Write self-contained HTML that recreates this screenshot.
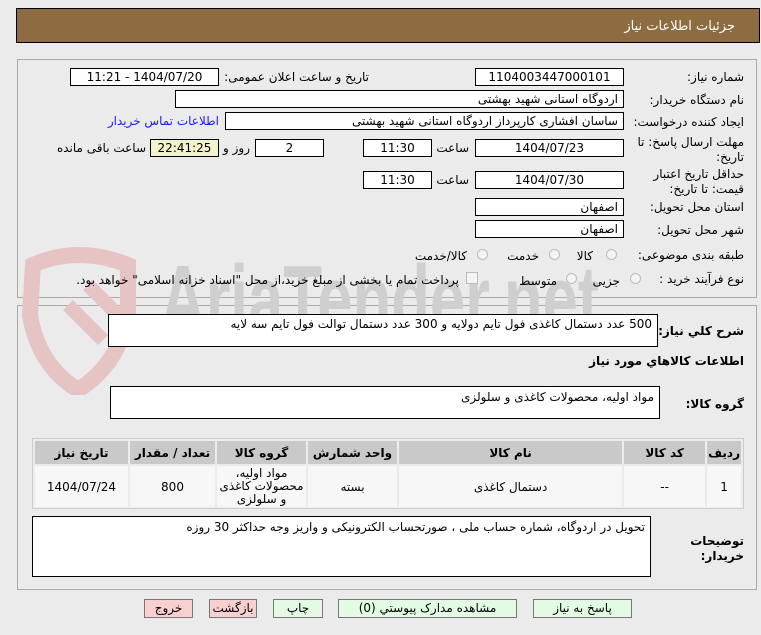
<!DOCTYPE html>
<html><head><meta charset="utf-8"><style>
body{margin:0;width:761px;height:635px;background:#ebebeb;font-family:Tahoma,"DejaVu Sans","Liberation Sans",sans-serif;font-size:12px;color:#000;position:relative;overflow:hidden}
.a{position:absolute}
.box{position:absolute;background:#fff;border:1px solid #000;box-sizing:border-box;direction:rtl;padding:0 5px;line-height:16px;white-space:nowrap}
.c{text-align:center}
.l{position:absolute;direction:rtl;white-space:nowrap;text-align:right}
.rad{position:absolute;width:11px;height:11px;border-radius:50%;border:1px solid #bbb;background:#f4f4f4;box-sizing:border-box}
.btn{position:absolute;top:599px;height:19px;border:1px solid #777;box-sizing:border-box;text-align:center;line-height:17px;font-size:12px;direction:rtl}
table{border-collapse:separate;border-spacing:2px;}
td{text-align:center;direction:rtl}
</style></head><body>
<div class="a" style="left:16px;top:8px;width:744px;height:35px;background:#8c6c40;border:1px solid #000;box-sizing:border-box"></div>
<div class="l" style="right:26px;top:19px;color:#fff;font-size:13px">جزئیات اطلاعات نیاز</div>

<div class="a" style="left:17px;top:59px;width:740px;height:239px;border:1px solid #aaa;box-sizing:border-box"></div>
<div class="a" style="left:17px;top:305px;width:740px;height:285px;border:1px solid #aaa;box-sizing:border-box"></div>

<!-- watermark -->
<svg class="a" style="left:18px;top:245px" width="130" height="150"><path d="M15 20 Q60 0 110 20 L110 70 Q100 120 60 145 Q20 120 12 70 Z" fill="none" stroke="#e6c4c4" stroke-width="16"/><path d="M50 60 L85 95 M70 40 L100 70" stroke="#e6c4c4" stroke-width="14"/></svg>
<div class="a" style="left:160px;top:250px;font-size:96px;font-weight:bold;color:#cfcfcf;font-family:'Liberation Sans',sans-serif;line-height:100px;transform:scaleX(0.66);transform-origin:0 0;white-space:nowrap">AriaTender.net</div>

<div class="l" style="right:17px;top:70px">شماره نیاز:</div>
<div class="box c" style="left:475px;top:68px;width:149px;height:18px">1104003447000101</div>
<div class="l" style="right:392px;top:70px">تاریخ و ساعت اعلان عمومی:</div>
<div class="box c" style="left:70px;top:68px;width:149px;height:18px">1404/07/20 - 11:21</div>

<div class="l" style="right:17px;top:93px">نام دستگاه خریدار:</div>
<div class="box" style="left:175px;top:90px;width:449px;height:18px">اردوگاه استانی شهید بهشتی</div>

<div class="l" style="right:17px;top:115px">ایجاد کننده درخواست:</div>
<div class="box" style="left:225px;top:112px;width:399px;height:18px">ساسان  افشاری کارپرداز اردوگاه استانی شهید بهشتی</div>
<div class="l" style="right:542px;top:114px;color:#1a1aff">اطلاعات تماس خریدار</div>

<div class="l" style="right:17px;top:135px;line-height:15px">مهلت ارسال پاسخ: تا<br>تاریخ:</div>
<div class="box c" style="left:475px;top:139px;width:149px;height:18px">1404/07/23</div>
<div class="l" style="right:292px;top:141px">ساعت</div>
<div class="box c" style="left:363px;top:139px;width:69px;height:18px">11:30</div>
<div class="box c" style="left:255px;top:139px;width:69px;height:18px">2</div>
<div class="l" style="right:511px;top:141px">روز و</div>
<div class="box c" style="left:150px;top:139px;width:69px;height:18px;background:#f2f2cc">22:41:25</div>
<div class="l" style="right:615px;top:141px">ساعت باقی مانده</div>

<div class="l" style="right:17px;top:167px;line-height:15px">حداقل تاریخ اعتبار<br>قیمت: تا تاریخ:</div>
<div class="box c" style="left:475px;top:171px;width:149px;height:18px">1404/07/30</div>
<div class="l" style="right:292px;top:173px">ساعت</div>
<div class="box c" style="left:363px;top:171px;width:69px;height:18px">11:30</div>

<div class="l" style="right:17px;top:200px">استان محل تحویل:</div>
<div class="box" style="left:475px;top:198px;width:149px;height:18px">اصفهان</div>
<div class="l" style="right:17px;top:223px">شهر محل تحویل:</div>
<div class="box" style="left:475px;top:220px;width:149px;height:18px">اصفهان</div>

<div class="l" style="right:17px;top:248px">طبقه بندی موضوعی:</div>
<div class="rad" style="left:606px;top:249px"></div><div class="l" style="right:168px;top:249px">کالا</div>
<div class="rad" style="left:549px;top:249px"></div><div class="l" style="right:222px;top:249px">خدمت</div>
<div class="rad" style="left:477px;top:249px"></div><div class="l" style="right:294px;top:249px">کالا/خدمت</div>

<div class="l" style="right:17px;top:272px">نوع فرآیند خرید :</div>
<div class="rad" style="left:630px;top:273px"></div><div class="l" style="right:141px;top:274px">جزیی</div>
<div class="rad" style="left:566px;top:273px"></div><div class="l" style="right:204px;top:274px">متوسط</div>
<div class="a" style="left:466px;top:272px;width:12px;height:12px;border:1px solid #bbb;background:#f4f4f4;box-sizing:border-box"></div>
<div class="l" style="right:302px;top:273px">پرداخت تمام یا بخشی از مبلغ خرید،از محل "اسناد خزانه اسلامی" خواهد بود.</div>

<div class="l" style="right:17px;top:324px;font-weight:bold">شرح کلي نياز:</div>
<div class="box" style="left:108px;top:314px;width:550px;height:33px;padding-top:1px">500 عدد دستمال کاغذی فول تایم دولایه و 300 عدد دستمال توالت فول تایم سه لایه</div>
<div class="l" style="right:17px;top:354px;font-weight:bold">اطلاعات کالاهاي مورد نياز</div>
<div class="l" style="right:17px;top:397px;font-weight:bold">گروه کالا:</div>
<div class="box" style="left:110px;top:386px;width:550px;height:33px;padding-top:2px">مواد اولیه، محصولات کاغذی و سلولزی</div>

<div class="a" style="left:32px;top:438px;width:712px;height:71px;border:1px solid #ccc;box-sizing:border-box;background:#ececec">
<table style="width:710px;position:absolute;left:0;top:0;direction:rtl;border-spacing:2px">
<tr style="background:#c9c9c9;font-weight:bold;height:23px"><td style="width:26px">رديف</td><td style="width:79px">کد کالا</td><td>نام کالا</td><td style="width:87px">واحد شمارش</td><td style="width:87px">گروه کالا</td><td style="width:83px">تعداد / مقدار</td><td style="width:91px">تاریخ نیاز</td></tr>
<tr style="background:#f7f7f7;height:41px"><td>1</td><td>--</td><td>دستمال کاغذی</td><td>بسته</td><td style="line-height:13px">مواد اولیه، محصولات کاغذی و سلولزی</td><td>800</td><td>1404/07/24</td></tr>
</table></div>

<div class="l" style="right:17px;top:534px;font-weight:bold;line-height:15px">توضیحات<br>خریدار:</div>
<div class="box" style="left:32px;top:516px;width:619px;height:61px;padding-top:2px">تحویل در اردوگاه، شماره حساب ملی ، صورتحساب الکترونیکی و واریز وجه حداکثر 30 روزه</div>

<div class="btn" style="left:144px;width:49px;background:#f8d0d0">خروج</div>
<div class="btn" style="left:209px;width:48px;background:#f8d0d0">بازگشت</div>
<div class="btn" style="left:273px;width:50px;background:#e2fbe2">چاپ</div>
<div class="btn" style="left:338px;width:179px;background:#e2fbe2">مشاهده مدارک پیوستي (0)</div>
<div class="btn" style="left:533px;width:99px;background:#e2fbe2">پاسخ به نیاز</div>
</body></html>
